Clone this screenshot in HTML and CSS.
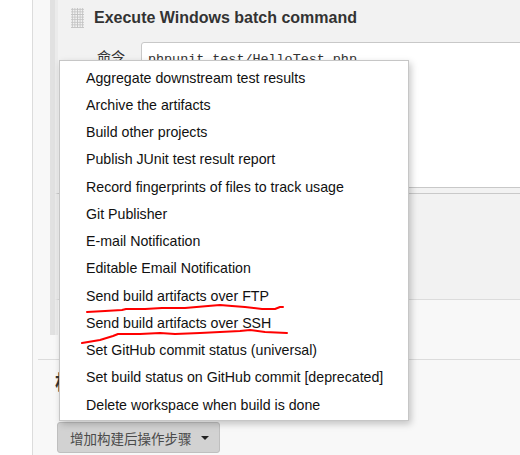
FILE: index.html
```html
<!DOCTYPE html>
<html lang="zh">
<head>
<meta charset="utf-8">
<title>Jenkins config</title>
<link rel="stylesheet" href="styles.css">
</head>
<body>
<div class="page">
  <div class="gutter"></div>
  <div class="main">
    <div class="builders">
      <div class="chunk">
        <div class="chunk-head">
          <span class="grip"></span>
          <span class="title">Execute Windows batch command</span>
        </div>
        <div class="field-row">
          <span class="field-label">命令</span>
          <div class="textarea">phpunit test/HelloTest.php</div>
        </div>
      </div>
      <div class="chunk2"></div>
      <div class="builder-foot"></div>
    </div>
    <div class="section">
      <div class="section-title">构建后操作</div>
      <button class="add-btn" type="button">增加构建后操作步骤<span class="caret"></span></button>
    </div>
  </div>
</div>

<ul class="menu">
  <li>Aggregate downstream test results</li>
  <li>Archive the artifacts</li>
  <li>Build other projects</li>
  <li>Publish JUnit test result report</li>
  <li>Record fingerprints of files to track usage</li>
  <li>Git Publisher</li>
  <li>E-mail Notification</li>
  <li>Editable Email Notification</li>
  <li>Send build artifacts over FTP</li>
  <li>Send build artifacts over SSH</li>
  <li>Set GitHub commit status (universal)</li>
  <li>Set build status on GitHub commit [deprecated]</li>
  <li>Delete workspace when build is done</li>
</ul>

<svg class="marks" width="520" height="455" viewBox="0 0 520 455">
  <polyline points="87,312 105,311 122,310 126,309 145,309 162,308 185,308 208,306 220,305 232,306 245,307 262,309 275,309 280,307 283,307" />
  <polyline points="82,343 100,340 113,336 118,334 140,334 160,333 175,334 200,333 240,331 250,330 265,332 287,333" />
</svg>
</body>
</html>
```

FILE: styles.css
```css
html, body {
  margin: 0;
  padding: 0;
}
body {
  width: 520px;
  height: 455px;
  overflow: hidden;
  background: #fff;
  font-family: "Liberation Sans", Arial, sans-serif;
  position: relative;
}
.page {
  display: flex;
  height: 455px;
}
.gutter {
  width: 32px;
  flex: none;
  background: #fff;
  border-right: 1px solid #dcdcdc;
}
.main {
  flex: 1;
  background: #f8f8f8;
  padding-left: 17px;
  display: flex;
  flex-direction: column;
  min-width: 0;
}
.builders {
  height: 335px;
  border-left: 5px solid #e1e1e1;
  display: flex;
  flex-direction: column;
}
.chunk {
  background: #f2f2f2;
  border-left: 3px solid #ebebeb;
  border-bottom: 1px solid #c9c9c9;
  height: 193px;
  display: flex;
  flex-direction: column;
}
.chunk-head {
  height: 42px;
  display: flex;
  align-items: flex-start;
}
.grip {
  width: 13px;
  height: 20px;
  margin: 8px 0 0 13px;
  background-image: radial-gradient(circle, #c4c4c4 0.9px, transparent 1.1px);
  background-size: 2.6px 2.6px;
}
.title {
  margin: 8px 0 0 10px;
  font-weight: bold;
  font-size: 16px;
  line-height: 20px;
  color: #333;
}
.field-row {
  display: flex;
  height: 146px;
}
.field-label {
  width: 44px;
  flex: none;
  padding: 6px 0 0 39px;
  font-family: "Noto Sans CJK SC", sans-serif;
  font-size: 14px;
  line-height: 16px;
  color: #333;
}
.textarea {
  flex: 1;
  margin-right: -10px;
  background: #fff;
  border: 1px solid #c8c8c8;
  border-radius: 3px 0 0 3px;
  padding: 9px 0 0 6px;
  font-family: "Liberation Mono", monospace;
  font-size: 13.4px;
  line-height: 16px;
  color: #333;
}
.chunk2 {
  height: 105px;
  background: #f2f2f2;
  border-left: 3px solid #ebebeb;
  border-bottom: 1px solid #dcdcdc;
}
.builder-foot {
  flex: 1;
  border-left: 3px solid #ececec;
}
.section {
  margin-top: 24px;
  margin-left: -12px;
  border-top: 1px solid #dcdcdc;
  padding: 8px 0 0 17px;
  display: flex;
  flex-direction: column;
  align-items: flex-start;
}
.section-title {
  font-family: "Noto Sans CJK SC", sans-serif;
  font-size: 20px;
  line-height: 28px;
  font-weight: bold;
  color: #333;
}
.add-btn {
  margin: 26px 0 0 2px;
  width: 163px;
  height: 31px;
  background: #d2d2d2;
  border: 1px solid #bfbfbf;
  border-radius: 3px;
  font-family: "Noto Sans CJK SC", sans-serif;
  font-size: 13.5px;
  color: #4a4a4a;
  padding: 0 0 0 12px;
  display: flex;
  align-items: center;
}
.caret {
  margin-left: 9px;
  width: 0;
  height: 0;
  border-left: 4px solid transparent;
  border-right: 4px solid transparent;
  border-top: 4px solid #222;
}
.menu {
  position: absolute;
  left: 59px;
  top: 60px;
  width: 322px;
  height: 355px;
  margin: 0;
  padding: 3.5px 0 0 26px;
  list-style: none;
  background: #fff;
  border: 1px solid #c6c6c6;
  box-shadow: 2px 3px 7px rgba(0, 0, 0, 0.22);
}
.menu li {
  height: 27.25px;
  line-height: 27.25px;
  font-size: 14.2px;
  color: #111;
  white-space: nowrap;
}
.marks {
  position: absolute;
  left: 0;
  top: 0;
  pointer-events: none;
}
.marks polyline {
  fill: none;
  stroke: #f00;
  stroke-width: 2;
  stroke-linejoin: round;
  stroke-linecap: round;
}
```
